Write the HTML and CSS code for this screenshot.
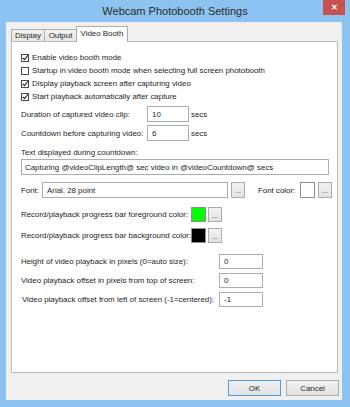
FILE: index.html
```html
<!DOCTYPE html>
<html lang="en">
<head>
  <meta charset="UTF-8">
  <title>Webcam Photobooth Settings</title>
  <link rel="stylesheet" href="styles.css">
</head>
<body>
  <div class="window">
    <div class="titlebar">
      <span></span>
      <span class="title">Webcam Photobooth Settings</span>
      <span class="close">&#x2715;</span>
    </div>

    <div class="client">
      <div class="tabs">
        <div class="tab tab-display">Display</div>
        <div class="tab tab-output">Output</div>
        <div class="tab tab-booth active">Video Booth</div>
      </div>

      <div class="panel">
        <!-- Check boxes -->
        <label class="check-row"><span class="check on"></span>Enable video booth mode</label>
        <label class="check-row"><span class="check"></span>Startup in video booth mode when selecting full screen photobooth</label>
        <label class="check-row"><span class="check on"></span>Display playback screen after capturing video</label>
        <label class="check-row"><span class="check on"></span>Start playback automatically after capture</label>

        <div class="row row-duration">
          <span class="label label-short">Duration of captured video clip:</span>
          <input class="field field-num" value="10">
          <span class="unit">secs</span>
        </div>
        <div class="row row-countdown">
          <span class="label label-short">Countdown before capturing video:</span>
          <input class="field field-num" value="6">
          <span class="unit">secs</span>
        </div>

        <div class="caption">Text displayed during countdown:</div>
        <input class="field field-wide" value="Capturing @videoClipLength@ sec video in @videoCountdown@ secs">

        <div class="row row-font">
          <span class="label">Font:</span>
          <input class="field field-font" value="Arial, 28 point">
          <span class="dots">...</span>
          <span class="label label-color">Font color:</span>
          <span class="swatch"></span>
          <span class="dots">...</span>
        </div>

        <div class="row row-fg">
          <span class="label label-bar">Record/playback progress bar foreground color:</span>
          <span class="swatch" style="background: #00ff00"></span>
          <span class="dots">...</span>
        </div>
        <div class="row row-bg">
          <span class="label label-bar">Record/playback progress bar background color:</span>
          <span class="swatch" style="background: #000000"></span>
          <span class="dots">...</span>
        </div>

        <div class="row row-height">
          <span class="label label-long">Height of video playback in pixels (0=auto size):</span>
          <input class="field field-px" value="0">
        </div>
        <div class="row row-offset">
          <span class="label label-long">Video playback offset in pixels from top of screen:</span>
          <input class="field field-px" value="0">
        </div>
        <div class="row row-offset">
          <span class="label label-long indent">Video playback offset from left of screen (-1=centered):</span>
          <input class="field field-px" value="-1">
        </div>
      </div>

      <div class="buttons">
        <button class="btn default">OK</button>
        <button class="btn">Cancel</button>
      </div>
    </div>
  </div>
</body>
</html>
```

FILE: styles.css
```css
body {
  margin: 0;
  padding: 0;
  font-family: 'Liberation Sans', Arial, sans-serif;
  font-size: 7.9px;
  color: #1e1e1e;
}

.window {
  width: 350px;
  height: 407px;
  background-color: #8dc3f0;
  display: flex;
  flex-direction: column;
  overflow: hidden;
}

/* Title bar */
.titlebar {
  height: 22px;
  display: grid;
  grid-template-columns: 1fr auto 1fr;
  align-items: start;
}

.title {
  font-size: 11px;
  color: #2b2b2b;
  line-height: 22px;
}

.close {
  justify-self: end;
  margin-right: 5px;
  width: 22px;
  height: 15px;
  background-color: #c75050;
  color: #ffffff;
  font-size: 8px;
  font-weight: bold;
  line-height: 15px;
  text-align: center;
}

/* Client area */
.client {
  flex: 1;
  margin: 0 8px 7px 6px;
  background-color: #f0f0f0;
  display: flex;
  flex-direction: column;
}

.tabs {
  display: flex;
  align-items: flex-end;
  height: 19px;
  padding-left: 5px;
}

.tab {
  height: 12px;
  box-sizing: border-box;
  border: 1px solid #acacac;
  border-bottom: none;
  background: linear-gradient(#f2f2f2, #e6e6e6);
  line-height: 11px;
  text-align: center;
  margin-right: -1px;
}

.tab-display { width: 34px; }
.tab-output { width: 33px; }

.tab-booth {
  width: 52px;
  height: 16px;
  background: #ffffff;
  line-height: 14px;
  margin-bottom: -1px;
  position: relative;
}

.panel {
  height: 332px;
  box-sizing: border-box;
  margin: 0 4px 0 5px;
  background-color: #ffffff;
  border: 1px solid #bcbcbc;
  padding: 9px 0 0 9px;
  display: flex;
  flex-direction: column;
  align-items: flex-start;
}

/* Check boxes */
.check-row {
  display: flex;
  align-items: center;
  height: 13px;
}

.check {
  width: 8px;
  height: 8px;
  box-sizing: border-box;
  border: 1px solid #4a4a4a;
  background: #ffffff;
  margin-right: 3px;
  position: relative;
}

.check.on::after {
  content: '';
  position: absolute;
  left: 1.5px;
  top: -0.5px;
  width: 2px;
  height: 4.5px;
  border: solid #111111;
  border-width: 0 1.5px 1.5px 0;
  transform: rotate(40deg);
}

/* Field rows */
.row {
  display: flex;
  align-items: center;
  height: 16px;
}

.row-duration { margin-top: 3px; }
.row-countdown { margin-top: 3px; }
.row-font { margin-top: 7px; }
.row-fg { margin-top: 9px; height: 15px; }
.row-bg { margin-top: 6px; height: 15px; }
.row-height { margin-top: 11px; height: 15px; }
.row-offset { margin-top: 4px; height: 15px; }

.label { white-space: nowrap; }
.label-short { width: 126px; }
.label-bar { width: 170px; }
.label-long { width: 198px; }
.indent { padding-left: 1px; box-sizing: border-box; }

.label-color {
  margin-left: 13px;
  width: 42px;
}

.caption {
  margin-top: 6px;
  height: 12px;
  line-height: 12px;
}

.field {
  box-sizing: border-box;
  height: 16px;
  border: 1px solid #abadb3;
  background: #ffffff;
  font-family: inherit;
  font-size: inherit;
  color: #1e1e1e;
  padding: 0 0 0 4px;
  margin: 0;
  outline: none;
}

.field-num { width: 42px; }
.field-wide { width: 308px; padding-left: 3px; }
.field-font { width: 186px; margin-left: 3px; }
.field-px { width: 44px; height: 15px; }

.unit { margin-left: 2px; }

.swatch {
  width: 15px;
  height: 15px;
  box-sizing: border-box;
  border: 1px solid #8f8f8f;
  background: #ffffff;
}

.row-font .swatch { height: 16px; }

.dots {
  width: 14px;
  height: 15px;
  box-sizing: border-box;
  margin-left: 2px;
  border: 1px solid #acacac;
  background: linear-gradient(#f2f2f2, #e3e3e3);
  color: #3a3a6a;
  text-align: center;
  line-height: 15px;
  font-size: 7px;
}

.row-font .dots { height: 16px; margin-left: 3px; }

/* Dialog buttons */
.buttons {
  display: flex;
  justify-content: flex-end;
  gap: 5px;
  margin-top: 7px;
  padding-right: 3px;
}

.btn {
  width: 53px;
  height: 16px;
  box-sizing: border-box;
  border: 1px solid #acacac;
  background: linear-gradient(#f2f2f2, #e3e3e3);
  font-family: inherit;
  font-size: inherit;
  color: #1e1e1e;
  padding: 0;
}

.btn.default {
  border-color: #4a9ce6;
}
```
